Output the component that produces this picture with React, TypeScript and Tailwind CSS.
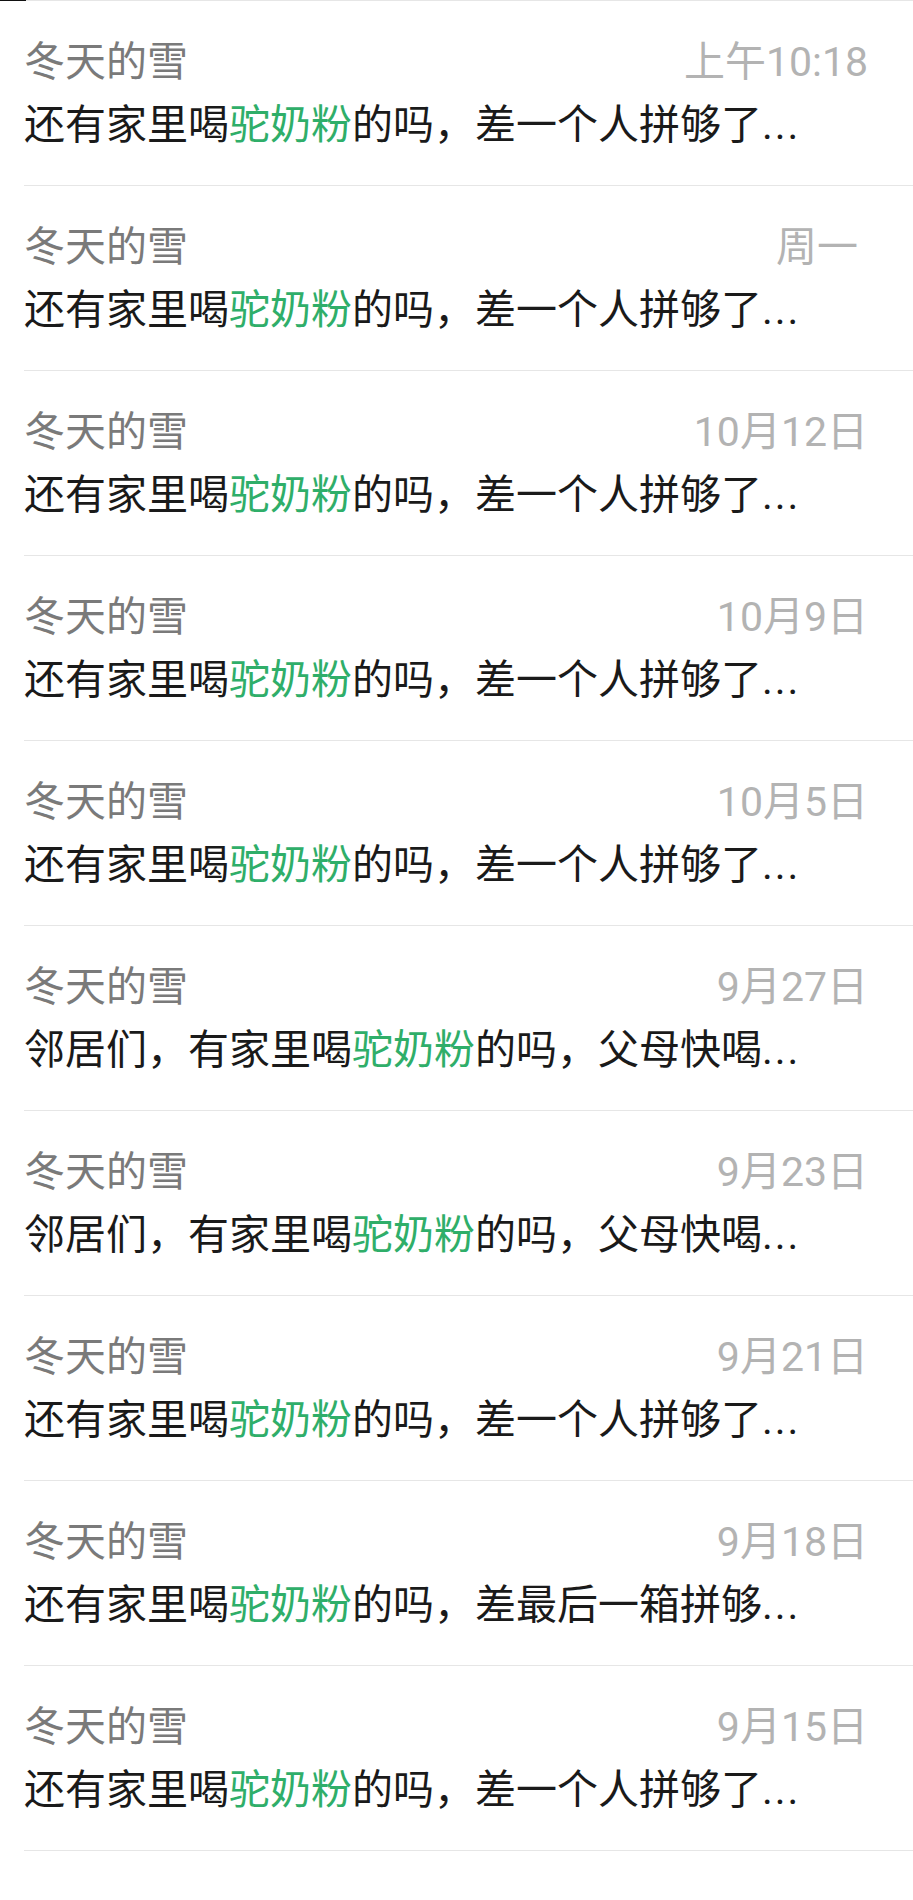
import React from 'react';

type Item = {
  name: string;
  time: string;
  before: string;
  after: string;
  timeShift?: string;
};

const KEYWORD = '驼奶粉';

const ITEMS: Item[] = [
  { name: '冬天的雪', time: '上午10:18', before: '还有家里喝', after: '的吗，差一个人拼够了' },
  { name: '冬天的雪', time: '周一', before: '还有家里喝', after: '的吗，差一个人拼够了', timeShift: 'mr-[10px]' },
  { name: '冬天的雪', time: '10月12日', before: '还有家里喝', after: '的吗，差一个人拼够了' },
  { name: '冬天的雪', time: '10月9日', before: '还有家里喝', after: '的吗，差一个人拼够了' },
  { name: '冬天的雪', time: '10月5日', before: '还有家里喝', after: '的吗，差一个人拼够了' },
  { name: '冬天的雪', time: '9月27日', before: '邻居们，有家里喝', after: '的吗，父母快喝' },
  { name: '冬天的雪', time: '9月23日', before: '邻居们，有家里喝', after: '的吗，父母快喝' },
  { name: '冬天的雪', time: '9月21日', before: '还有家里喝', after: '的吗，差一个人拼够了' },
  { name: '冬天的雪', time: '9月18日', before: '还有家里喝', after: '的吗，差最后一箱拼够' },
  { name: '冬天的雪', time: '9月15日', before: '还有家里喝', after: '的吗，差一个人拼够了' },
];

function Row({ item }: { item: Item }) {
  return (
    <div className="ml-[24px] h-[185px] border-b border-[#e6e6e6] pt-[37px] pr-[45px]">
      <div className="flex items-center justify-between text-[41px] leading-[48px]">
        <span className="text-[#7a7a7a]">{item.name}</span>
        <span className={`text-[#b3b3b3] ${item.timeShift ?? ''}`}>{item.time}</span>
      </div>
      <div className="mt-[15px] whitespace-nowrap text-[41px] leading-[48px] text-[#1a1a1a]">
        {item.before}
        <span className="text-[#2fae69]">{KEYWORD}</span>
        {item.after}
        <span className="tracking-[2px]">...</span>
      </div>
    </div>
  );
}

export default function App() {
  return (
    <main
      className="min-h-[1900px] w-[913px] bg-white"
      style={{ fontFamily: 'Roboto, "Noto Sans CJK SC", sans-serif' }}
    >
      {/* top edge: status strip + first divider */}
      <div className="flex h-[1px]">
        <div className="w-[26px] bg-[#111]" />
        <div className="flex-1 bg-[#e6e6e6]" />
      </div>
      {ITEMS.map((item, i) => (
        <Row key={i} item={item} />
      ))}
    </main>
  );
}
